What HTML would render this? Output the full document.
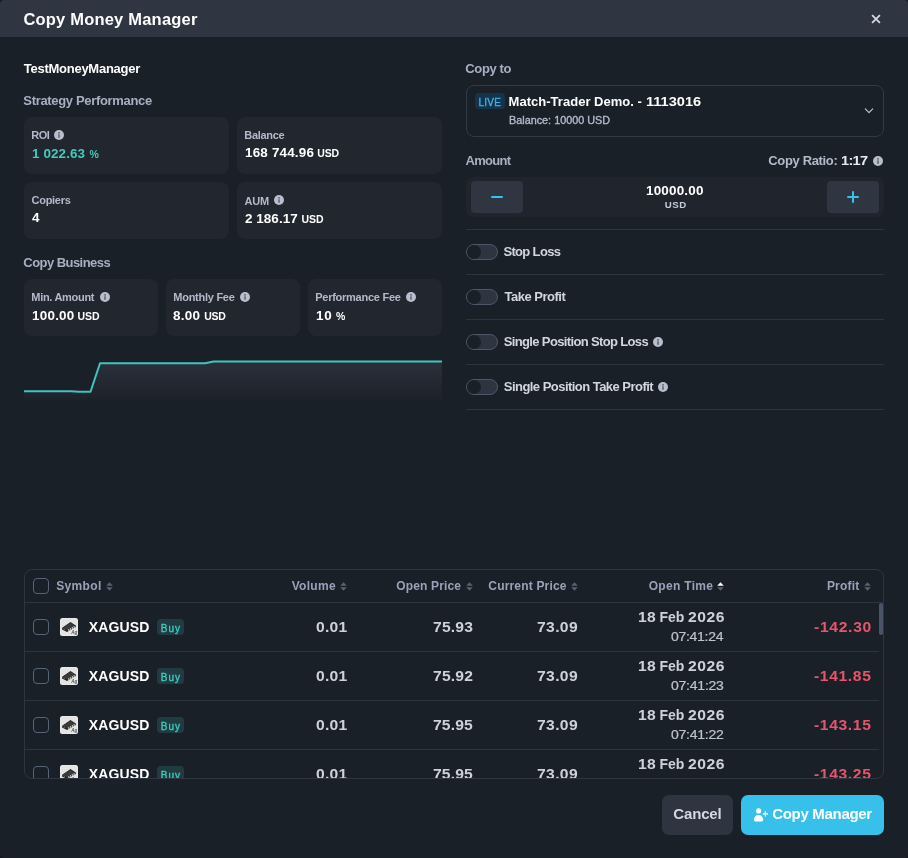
<!DOCTYPE html>
<html><head><meta charset="utf-8"><title>Copy Money Manager</title>
<style>
*{box-sizing:border-box;margin:0;padding:0}
html,body{width:908px;height:858px;overflow:hidden;background:#14181e;font-family:"Liberation Sans",sans-serif;color:#fff}
#root{position:absolute;left:0;top:0;width:908px;height:858px;will-change:transform;background:#1a2028;border-radius:4px;overflow:hidden}
.a{position:absolute}
.x{position:absolute;white-space:nowrap;line-height:1}
.card{position:absolute;background:#22272f;border-radius:8px}
.hr{position:absolute;left:466px;width:418px;height:1px;background:#2d333f}
.tog{position:absolute;left:466px;width:32px;height:16px;border-radius:8px;background:#2f3441;border:1px solid #4c586a}
.tog:before{content:"";position:absolute;left:0;top:0;width:14px;height:14px;border-radius:50%;background:#1a2028}
#tbl{position:absolute;left:24px;top:569px;width:860px;height:210px;border:1px solid #2f3541;border-radius:8px;overflow:hidden}
#tin{position:absolute;left:-25px;top:-570px;width:908px;height:858px}
.cb{position:absolute;left:33px;width:16px;height:16px;border:1px solid #566478;border-radius:4px}
.rl{position:absolute;left:25px;width:854px;height:1px;background:#2d333f}
.buy{position:absolute;left:157px;width:27px;height:16px;border-radius:4px;background:#203c42}
</style></head><body>
<div id="root">
<div class="a" style="left:0;top:0;width:908px;height:37px;background:#2f3541;"></div>
<svg class="a" style="left:871px;top:13.85px" width="10" height="10" viewBox="0 0 10 10"><path d="M1.1 1.1L8.9 8.9M8.9 1.1L1.1 8.9" stroke="#d2d6e1" stroke-width="1.85"/></svg>
<div class="card" style="left:24px;top:117px;width:205px;height:57px"></div>
<div class="card" style="left:237px;top:117px;width:205px;height:57px"></div>
<div class="card" style="left:24px;top:182px;width:205px;height:57px"></div>
<div class="card" style="left:237px;top:182px;width:205px;height:57px"></div>
<div class="card" style="left:24px;top:279px;width:134px;height:57px"></div>
<div class="card" style="left:166px;top:279px;width:134px;height:57px"></div>
<div class="card" style="left:308px;top:279px;width:134px;height:57px"></div>
<svg class="a" style="left:54px;top:130px" width="10" height="10" viewBox="0 0 10 10"><circle cx="5" cy="5" r="5" fill="#b9becc"/><circle cx="5" cy="2.9" r="0.8" fill="#4d5361"/><rect x="4.35" y="4.3" width="1.3" height="3.5" rx="0.3" fill="#4d5361"/></svg>
<svg class="a" style="left:274px;top:195px" width="10" height="10" viewBox="0 0 10 10"><circle cx="5" cy="5" r="5" fill="#b9becc"/><circle cx="5" cy="2.9" r="0.8" fill="#4d5361"/><rect x="4.35" y="4.3" width="1.3" height="3.5" rx="0.3" fill="#4d5361"/></svg>
<svg class="a" style="left:100px;top:292px" width="10" height="10" viewBox="0 0 10 10"><circle cx="5" cy="5" r="5" fill="#b9becc"/><circle cx="5" cy="2.9" r="0.8" fill="#4d5361"/><rect x="4.35" y="4.3" width="1.3" height="3.5" rx="0.3" fill="#4d5361"/></svg>
<svg class="a" style="left:240px;top:292px" width="10" height="10" viewBox="0 0 10 10"><circle cx="5" cy="5" r="5" fill="#b9becc"/><circle cx="5" cy="2.9" r="0.8" fill="#4d5361"/><rect x="4.35" y="4.3" width="1.3" height="3.5" rx="0.3" fill="#4d5361"/></svg>
<svg class="a" style="left:406px;top:292px" width="10" height="10" viewBox="0 0 10 10"><circle cx="5" cy="5" r="5" fill="#b9becc"/><circle cx="5" cy="2.9" r="0.8" fill="#4d5361"/><rect x="4.35" y="4.3" width="1.3" height="3.5" rx="0.3" fill="#4d5361"/></svg>
<svg class="a" style="left:873px;top:156px" width="10" height="10" viewBox="0 0 10 10"><circle cx="5" cy="5" r="5" fill="#b9becc"/><circle cx="5" cy="2.9" r="0.8" fill="#474d5a"/><rect x="4.35" y="4.3" width="1.3" height="3.5" rx="0.3" fill="#474d5a"/></svg>
<svg class="a" style="left:653px;top:337px" width="10" height="10" viewBox="0 0 10 10"><circle cx="5" cy="5" r="5" fill="#b9becc"/><circle cx="5" cy="2.9" r="0.8" fill="#474d5a"/><rect x="4.35" y="4.3" width="1.3" height="3.5" rx="0.3" fill="#474d5a"/></svg>
<svg class="a" style="left:658px;top:382px" width="10" height="10" viewBox="0 0 10 10"><circle cx="5" cy="5" r="5" fill="#b9becc"/><circle cx="5" cy="2.9" r="0.8" fill="#474d5a"/><rect x="4.35" y="4.3" width="1.3" height="3.5" rx="0.3" fill="#474d5a"/></svg>
<svg class="a" style="left:24px;top:350px" width="418" height="52" viewBox="0 0 418 52">
<defs><linearGradient id="g" gradientUnits="userSpaceOnUse" x1="0" y1="11" x2="0" y2="50.5"><stop offset="0" stop-color="#2b303b"/><stop offset="1" stop-color="#1c222a"/></linearGradient></defs>
<path d="M0 41.25H47L55 41.75H66.5L76 13.25H181L189.75 11.5H418V50.5H0Z" fill="url(#g)"/>
<path d="M0 41.25H47L55 41.75H66.5L76 13.25H181L189.75 11.5H418" fill="none" stroke="#40c4bd" stroke-width="2" stroke-linejoin="round"/></svg>
<div class="a" style="left:466px;top:85px;width:418px;height:52px;border:1px solid #333a47;border-radius:8px"></div>
<div class="a" style="left:475px;top:93px;width:30px;height:16px;border-radius:4px;background:#15334a"></div>
<svg class="a" style="left:863px;top:106.4px" width="12" height="10" viewBox="0 0 12 10"><path d="M2.35 2.9L6 6.6L9.65 2.9" fill="none" stroke="#c3c8d5" stroke-width="1.15" stroke-linecap="round" stroke-linejoin="round"/></svg>
<div class="a" style="left:466px;top:177px;width:418px;height:40px;background:#20252d;border-radius:7px"></div>
<div class="a" style="left:471px;top:181px;width:52px;height:32px;background:#2f3541;border-radius:4px"></div>
<div class="a" style="left:827px;top:181px;width:52px;height:32px;background:#2f3541;border-radius:4px"></div>
<div class="a" style="left:491px;top:196.2px;width:12px;height:2px;background:#3bc0ee;border-radius:1px"></div>
<div class="a" style="left:847px;top:196.2px;width:12px;height:2px;background:#3bc0ee;border-radius:1px"></div>
<div class="a" style="left:852px;top:191.2px;width:2px;height:12px;background:#3bc0ee;border-radius:1px"></div>
<div class="hr" style="top:229px"></div>
<div class="hr" style="top:274px"></div>
<div class="hr" style="top:319px"></div>
<div class="hr" style="top:364px"></div>
<div class="hr" style="top:409px"></div>
<div class="tog" style="top:244px"></div>
<div class="tog" style="top:289px"></div>
<div class="tog" style="top:334px"></div>
<div class="tog" style="top:379px"></div>
<div class="x" id="title" style="left:23.41px;top:11.36px;font-size:16.5px;color:#fff;font-weight:bold;letter-spacing:0.200px">Copy Money Manager</div>
<div class="x" id="name" style="left:23.77px;top:61.92px;font-size:13px;color:#fff;font-weight:bold;letter-spacing:-0.260px">TestMoneyManager</div>
<div class="x" id="sp" style="left:23.35px;top:93.92px;font-size:13px;color:#a9afc1;font-weight:bold;letter-spacing:-0.331px">Strategy Performance</div>
<div class="x" id="cb_" style="left:23.33px;top:256.42px;font-size:13px;color:#a9afc1;font-weight:bold;letter-spacing:-0.549px">Copy Business</div>
<div class="x" id="l_roi" style="left:31.28px;top:129.74px;font-size:11px;color:#b3b9ca;font-weight:bold;letter-spacing:-0.468px">ROI</div>
<div class="x" id="l_bal" style="left:244.28px;top:129.74px;font-size:11px;color:#b3b9ca;font-weight:bold;letter-spacing:-0.301px">Balance</div>
<div class="x" id="l_cop" style="left:31.56px;top:194.74px;font-size:11px;color:#b3b9ca;font-weight:bold;letter-spacing:-0.281px">Copiers</div>
<div class="x" id="l_aum" style="left:244.38px;top:196.24px;font-size:11px;color:#b3b9ca;font-weight:bold;letter-spacing:-0.078px">AUM</div>
<div class="x" id="l_min" style="left:31.28px;top:291.74px;font-size:11px;color:#b3b9ca;font-weight:bold;letter-spacing:-0.292px">Min. Amount</div>
<div class="x" id="l_mon" style="left:173.28px;top:291.74px;font-size:11px;color:#b3b9ca;font-weight:bold;letter-spacing:-0.260px">Monthly Fee</div>
<div class="x" id="l_per" style="left:315.28px;top:291.74px;font-size:11px;color:#b3b9ca;font-weight:bold;letter-spacing:-0.262px">Performance Fee</div>
<div class="x" id="v_roi" style="left:32.26px;top:147.58px;font-size:12px;color:#40cbbc;font-weight:bold;letter-spacing:0.090px;transform:scaleX(1.12);transform-origin:0 0">1 022.63</div>
<div class="x" id="v_roip" style="left:89.62px;top:148.82px;font-size:10.5px;color:#40cbbc;font-weight:bold">%</div>
<div class="x" id="v_bal" style="left:245.10px;top:146.58px;font-size:12px;color:#fff;font-weight:bold;letter-spacing:0.163px;transform:scaleX(1.12);transform-origin:0 0">168 744.96</div>
<div class="x" id="v_balu" style="left:317.33px;top:147.82px;font-size:10.5px;color:#fff;font-weight:bold;letter-spacing:-0.155px">USD</div>
<div class="x" id="v_cop" style="left:31.72px;top:211.58px;font-size:12px;color:#fff;font-weight:bold;transform:scaleX(1.12);transform-origin:0 0">4</div>
<div class="x" id="v_aum" style="left:244.97px;top:212.58px;font-size:12px;color:#fff;font-weight:bold;letter-spacing:0.045px;transform:scaleX(1.12);transform-origin:0 0">2 186.17</div>
<div class="x" id="v_aumu" style="left:301.61px;top:213.82px;font-size:10.5px;color:#fff;font-weight:bold;letter-spacing:-0.132px">USD</div>
<div class="x" id="v_min" style="left:31.56px;top:310.33px;font-size:12px;color:#fff;font-weight:bold;letter-spacing:0.210px;transform:scaleX(1.12);transform-origin:0 0">100.00</div>
<div class="x" id="v_minu" style="left:77.61px;top:310.57px;font-size:10.5px;color:#fff;font-weight:bold;letter-spacing:-0.132px">USD</div>
<div class="x" id="v_mon" style="left:173.45px;top:310.33px;font-size:12px;color:#fff;font-weight:bold;letter-spacing:0.222px;transform:scaleX(1.12);transform-origin:0 0">8.00</div>
<div class="x" id="v_monu" style="left:204.33px;top:310.57px;font-size:10.5px;color:#fff;font-weight:bold;letter-spacing:-0.292px">USD</div>
<div class="x" id="v_per" style="left:315.99px;top:310.33px;font-size:12px;color:#fff;font-weight:bold;letter-spacing:0.693px;transform:scaleX(1.12);transform-origin:0 0">10</div>
<div class="x" id="v_perp" style="left:335.97px;top:310.57px;font-size:10.5px;color:#fff;font-weight:bold">%</div>
<div class="x" id="copyto" style="left:465.33px;top:62.17px;font-size:13px;color:#a9afc1;font-weight:bold;letter-spacing:-0.386px">Copy to</div>
<div class="x" id="live" style="left:478.55px;top:97.65px;font-size:10px;color:#3bb3e6;font-weight:normal;-webkit-text-stroke:0.35px #3bb3e6;letter-spacing:0.204px">LIVE</div>
<div class="x" id="acct" style="left:508.60px;top:94.92px;font-size:13px;color:#fff;font-weight:bold;letter-spacing:0.020px">Match-Trader Demo. -</div>
<div class="x" id="acctn" style="left:645.84px;top:94.92px;font-size:13px;color:#fff;font-weight:bold;transform:scaleX(1.12);transform-origin:0 0">1113016</div>
<div class="x" id="acctb" style="left:509.44px;top:115.74px;font-size:10.4px;color:#b3b9c9;font-weight:normal;-webkit-text-stroke:0.35px #b3b9c9;letter-spacing:0.009px;transform:scaleX(1.04);transform-origin:0 0">Balance: 10000 USD</div>
<div class="x" id="amount" style="left:465.54px;top:154.17px;font-size:13px;color:#a9afc1;font-weight:bold;letter-spacing:-0.719px">Amount</div>
<div class="x" id="ratio" style="left:768.32px;top:154.17px;font-size:13px;color:#b4bac9;font-weight:bold;letter-spacing:-0.349px">Copy Ratio:</div>
<div class="x" id="ratiov" style="left:840.67px;top:154.17px;font-size:13px;color:#e6e9f0;font-weight:bold;letter-spacing:-0.638px;transform:scaleX(1.12);transform-origin:0 0">1:17</div>
<div class="x" id="amt" style="left:646.40px;top:184.58px;font-size:12px;color:#fff;font-weight:bold;letter-spacing:0.178px;transform:scaleX(1.12);transform-origin:0 0">10000.00</div>
<div class="x" id="amtu" style="left:664.75px;top:200.40px;font-size:9.7px;color:#c6cbd8;font-weight:bold;letter-spacing:0.482px">USD</div>
<div class="x" id="tg1" style="left:503.42px;top:245.42px;font-size:13px;color:#d2d6e0;font-weight:bold;letter-spacing:-0.659px">Stop Loss</div>
<div class="x" id="tg2" style="left:504.40px;top:290.42px;font-size:13px;color:#d2d6e0;font-weight:bold;letter-spacing:-0.482px">Take Profit</div>
<div class="x" id="tg3" style="left:503.78px;top:335.42px;font-size:13px;color:#d2d6e0;font-weight:bold;letter-spacing:-0.645px">Single Position Stop Loss</div>
<div class="x" id="tg4" style="left:503.78px;top:380.42px;font-size:13px;color:#d2d6e0;font-weight:bold;letter-spacing:-0.534px">Single Position Take Profit</div>
<div id="tbl"><div id="tin">
<div class="cb" style="top:578px"></div>
<svg class="a" style="left:105.5px;top:581.5px" width="7" height="9" viewBox="0 0 7 9"><path d="M0.2 3.7L3.5 0.3L6.8 3.7Z" fill="#596274"/><path d="M0.2 5.3L3.5 8.7L6.8 5.3Z" fill="#596274"/></svg>
<svg class="a" style="left:339.8px;top:581.5px" width="7" height="9" viewBox="0 0 7 9"><path d="M0.2 3.7L3.5 0.3L6.8 3.7Z" fill="#596274"/><path d="M0.2 5.3L3.5 8.7L6.8 5.3Z" fill="#596274"/></svg>
<svg class="a" style="left:465.8px;top:581.5px" width="7" height="9" viewBox="0 0 7 9"><path d="M0.2 3.7L3.5 0.3L6.8 3.7Z" fill="#596274"/><path d="M0.2 5.3L3.5 8.7L6.8 5.3Z" fill="#596274"/></svg>
<svg class="a" style="left:570.8px;top:581.5px" width="7" height="9" viewBox="0 0 7 9"><path d="M0.2 3.7L3.5 0.3L6.8 3.7Z" fill="#596274"/><path d="M0.2 5.3L3.5 8.7L6.8 5.3Z" fill="#596274"/></svg>
<svg class="a" style="left:716.6px;top:581.5px" width="7" height="9" viewBox="0 0 7 9"><path d="M0.2 3.7L3.5 0.3L6.8 3.7Z" fill="#fff"/><path d="M0.2 5.3L3.5 8.7L6.8 5.3Z" fill="#596274"/></svg>
<svg class="a" style="left:863.8px;top:581.5px" width="7" height="9" viewBox="0 0 7 9"><path d="M0.2 3.7L3.5 0.3L6.8 3.7Z" fill="#596274"/><path d="M0.2 5.3L3.5 8.7L6.8 5.3Z" fill="#596274"/></svg>
<div class="a" style="left:25px;top:602px;width:858px;height:1px;background:#2d333f"></div>
<div class="cb" style="top:619px"></div><svg class="a" style="left:60px;top:618px" width="18" height="18" viewBox="0 0 18 18"><rect width="18" height="18" rx="2.5" fill="#efefef"/><rect x="0.6" y="0.6" width="16.8" height="16.8" rx="2" fill="#e4e4e4"/><path d="M2.2 9.7L10.5 4.1L15.8 7.5L15.9 9L7 14L2 11.4Z" fill="#262626"/><path d="M3.2 9.8L10.5 4.9L14.6 7.5L7.2 12.2Z" fill="#3b3b3b"/><path d="M8.3 12.4L9.4 11.75M10.1 11.35L11.2 10.7M11.9 10.3L13 9.65M13.6 9.3L14.7 8.65" stroke="#e0e0e0" stroke-width="1.5"/><path d="M3.6 10.9L4.6 11.45" stroke="#bbb" stroke-width="0.8"/><text x="11.2" y="16.3" font-family="Liberation Sans" font-size="4.6" font-weight="bold" font-style="italic" fill="#5a5a5a">Ag</text></svg><div class="buy" style="top:619px"></div><div class="rl" style="top:651px"></div>
<div class="cb" style="top:668px"></div><svg class="a" style="left:60px;top:667px" width="18" height="18" viewBox="0 0 18 18"><rect width="18" height="18" rx="2.5" fill="#efefef"/><rect x="0.6" y="0.6" width="16.8" height="16.8" rx="2" fill="#e4e4e4"/><path d="M2.2 9.7L10.5 4.1L15.8 7.5L15.9 9L7 14L2 11.4Z" fill="#262626"/><path d="M3.2 9.8L10.5 4.9L14.6 7.5L7.2 12.2Z" fill="#3b3b3b"/><path d="M8.3 12.4L9.4 11.75M10.1 11.35L11.2 10.7M11.9 10.3L13 9.65M13.6 9.3L14.7 8.65" stroke="#e0e0e0" stroke-width="1.5"/><path d="M3.6 10.9L4.6 11.45" stroke="#bbb" stroke-width="0.8"/><text x="11.2" y="16.3" font-family="Liberation Sans" font-size="4.6" font-weight="bold" font-style="italic" fill="#5a5a5a">Ag</text></svg><div class="buy" style="top:668px"></div><div class="rl" style="top:700px"></div>
<div class="cb" style="top:717px"></div><svg class="a" style="left:60px;top:716px" width="18" height="18" viewBox="0 0 18 18"><rect width="18" height="18" rx="2.5" fill="#efefef"/><rect x="0.6" y="0.6" width="16.8" height="16.8" rx="2" fill="#e4e4e4"/><path d="M2.2 9.7L10.5 4.1L15.8 7.5L15.9 9L7 14L2 11.4Z" fill="#262626"/><path d="M3.2 9.8L10.5 4.9L14.6 7.5L7.2 12.2Z" fill="#3b3b3b"/><path d="M8.3 12.4L9.4 11.75M10.1 11.35L11.2 10.7M11.9 10.3L13 9.65M13.6 9.3L14.7 8.65" stroke="#e0e0e0" stroke-width="1.5"/><path d="M3.6 10.9L4.6 11.45" stroke="#bbb" stroke-width="0.8"/><text x="11.2" y="16.3" font-family="Liberation Sans" font-size="4.6" font-weight="bold" font-style="italic" fill="#5a5a5a">Ag</text></svg><div class="buy" style="top:717px"></div><div class="rl" style="top:749px"></div>
<div class="cb" style="top:766px"></div><svg class="a" style="left:60px;top:765px" width="18" height="18" viewBox="0 0 18 18"><rect width="18" height="18" rx="2.5" fill="#efefef"/><rect x="0.6" y="0.6" width="16.8" height="16.8" rx="2" fill="#e4e4e4"/><path d="M2.2 9.7L10.5 4.1L15.8 7.5L15.9 9L7 14L2 11.4Z" fill="#262626"/><path d="M3.2 9.8L10.5 4.9L14.6 7.5L7.2 12.2Z" fill="#3b3b3b"/><path d="M8.3 12.4L9.4 11.75M10.1 11.35L11.2 10.7M11.9 10.3L13 9.65M13.6 9.3L14.7 8.65" stroke="#e0e0e0" stroke-width="1.5"/><path d="M3.6 10.9L4.6 11.45" stroke="#bbb" stroke-width="0.8"/><text x="11.2" y="16.3" font-family="Liberation Sans" font-size="4.6" font-weight="bold" font-style="italic" fill="#5a5a5a">Ag</text></svg><div class="buy" style="top:766px"></div><div class="rl" style="top:798px"></div>
<div class="a" style="left:879px;top:603px;width:4px;height:32px;border-radius:2px;background:#4b5467"></div>
<div class="x" id="h_sym" style="left:56.13px;top:579.58px;font-size:12px;color:#99a2b8;font-weight:bold;letter-spacing:0.357px">Symbol</div>
<div class="x" id="h_vol" style="left:291.70px;top:579.58px;font-size:12px;color:#99a2b8;font-weight:bold;letter-spacing:0.284px">Volume</div>
<div class="x" id="h_op" style="left:396.35px;top:579.58px;font-size:12px;color:#99a2b8;font-weight:bold;letter-spacing:0.140px">Open Price</div>
<div class="x" id="h_cp" style="left:488.35px;top:579.58px;font-size:12px;color:#99a2b8;font-weight:bold;letter-spacing:0.171px">Current Price</div>
<div class="x" id="h_ot" style="left:648.70px;top:579.58px;font-size:12px;color:#99a2b8;font-weight:bold;letter-spacing:0.315px">Open Time</div>
<div class="x" id="h_pf" style="left:826.91px;top:579.58px;font-size:12px;color:#99a2b8;font-weight:bold;letter-spacing:0.212px">Profit</div>
<div class="x" id="r0s" style="left:88.65px;top:619.76px;font-size:14px;color:#fff;font-weight:bold;letter-spacing:0.152px">XAGUSD</div>
<div class="x" id="r0b" style="left:160.65px;top:624.32px;font-size:10px;color:#40cbbc;font-weight:normal;-webkit-text-stroke:0.35px #40cbbc;letter-spacing:1.104px">Buy</div>
<div class="x" id="r0v" style="left:315.87px;top:619.76px;font-size:14px;color:#cdd1dc;font-weight:bold;letter-spacing:0.237px;transform:scaleX(1.12);transform-origin:0 0">0.01</div>
<div class="x" id="r0o" style="left:432.98px;top:619.76px;font-size:14px;color:#cdd1dc;font-weight:bold;letter-spacing:0.166px;transform:scaleX(1.12);transform-origin:0 0">75.93</div>
<div class="x" id="r0c" style="left:536.94px;top:619.76px;font-size:14px;color:#cdd1dc;font-weight:bold;letter-spacing:0.307px;transform:scaleX(1.12);transform-origin:0 0">73.09</div>
<div class="x" id="r0d" style="left:637.74px;top:609.76px;font-size:14px;color:#cdd1dc;font-weight:bold;letter-spacing:0.139px;transform:scaleX(1.12);transform-origin:0 0">18</div>
<div class="x" id="r0e" style="left:659.51px;top:609.76px;font-size:14px;color:#cdd1dc;font-weight:bold">Feb</div>
<div class="x" id="r0f" style="left:688.27px;top:609.76px;font-size:14px;color:#cdd1dc;font-weight:bold;letter-spacing:0.471px;transform:scaleX(1.12);transform-origin:0 0">2026</div>
<div class="x" id="r0t" style="left:671.28px;top:631.00px;font-size:12.5px;color:#bec3d0;font-weight:normal;-webkit-text-stroke:0.2px #bec3d0;letter-spacing:-0.252px;transform:scaleX(1.12);transform-origin:0 0">07:41:24</div>
<div class="x" id="r0p" style="left:813.91px;top:619.76px;font-size:14px;color:#e5556b;font-weight:bold;letter-spacing:0.605px;transform:scaleX(1.12);transform-origin:0 0">-142.30</div>
<div class="x" id="r1s" style="left:88.65px;top:668.76px;font-size:14px;color:#fff;font-weight:bold;letter-spacing:0.152px">XAGUSD</div>
<div class="x" id="r1b" style="left:160.65px;top:673.32px;font-size:10px;color:#40cbbc;font-weight:normal;-webkit-text-stroke:0.35px #40cbbc;letter-spacing:1.104px">Buy</div>
<div class="x" id="r1v" style="left:315.87px;top:668.76px;font-size:14px;color:#cdd1dc;font-weight:bold;letter-spacing:0.237px;transform:scaleX(1.12);transform-origin:0 0">0.01</div>
<div class="x" id="r1o" style="left:432.94px;top:668.76px;font-size:14px;color:#cdd1dc;font-weight:bold;letter-spacing:0.151px;transform:scaleX(1.12);transform-origin:0 0">75.92</div>
<div class="x" id="r1c" style="left:536.94px;top:668.76px;font-size:14px;color:#cdd1dc;font-weight:bold;letter-spacing:0.307px;transform:scaleX(1.12);transform-origin:0 0">73.09</div>
<div class="x" id="r1d" style="left:637.74px;top:658.76px;font-size:14px;color:#cdd1dc;font-weight:bold;letter-spacing:0.139px;transform:scaleX(1.12);transform-origin:0 0">18</div>
<div class="x" id="r1e" style="left:659.51px;top:658.76px;font-size:14px;color:#cdd1dc;font-weight:bold">Feb</div>
<div class="x" id="r1f" style="left:688.27px;top:658.76px;font-size:14px;color:#cdd1dc;font-weight:bold;letter-spacing:0.471px;transform:scaleX(1.12);transform-origin:0 0">2026</div>
<div class="x" id="r1t" style="left:671.23px;top:680.00px;font-size:12.5px;color:#bec3d0;font-weight:normal;-webkit-text-stroke:0.2px #bec3d0;letter-spacing:-0.203px;transform:scaleX(1.12);transform-origin:0 0">07:41:23</div>
<div class="x" id="r1p" style="left:813.86px;top:668.76px;font-size:14px;color:#e5556b;font-weight:bold;letter-spacing:0.547px;transform:scaleX(1.12);transform-origin:0 0">-141.85</div>
<div class="x" id="r2s" style="left:88.65px;top:717.76px;font-size:14px;color:#fff;font-weight:bold;letter-spacing:0.152px">XAGUSD</div>
<div class="x" id="r2b" style="left:160.65px;top:722.32px;font-size:10px;color:#40cbbc;font-weight:normal;-webkit-text-stroke:0.35px #40cbbc;letter-spacing:1.104px">Buy</div>
<div class="x" id="r2v" style="left:315.87px;top:717.76px;font-size:14px;color:#cdd1dc;font-weight:bold;letter-spacing:0.237px;transform:scaleX(1.12);transform-origin:0 0">0.01</div>
<div class="x" id="r2o" style="left:433.05px;top:717.76px;font-size:14px;color:#cdd1dc;font-weight:bold;letter-spacing:0.123px;transform:scaleX(1.12);transform-origin:0 0">75.95</div>
<div class="x" id="r2c" style="left:536.94px;top:717.76px;font-size:14px;color:#cdd1dc;font-weight:bold;letter-spacing:0.307px;transform:scaleX(1.12);transform-origin:0 0">73.09</div>
<div class="x" id="r2d" style="left:637.74px;top:707.76px;font-size:14px;color:#cdd1dc;font-weight:bold;letter-spacing:0.139px;transform:scaleX(1.12);transform-origin:0 0">18</div>
<div class="x" id="r2e" style="left:659.51px;top:707.76px;font-size:14px;color:#cdd1dc;font-weight:bold">Feb</div>
<div class="x" id="r2f" style="left:688.27px;top:707.76px;font-size:14px;color:#cdd1dc;font-weight:bold;letter-spacing:0.471px;transform:scaleX(1.12);transform-origin:0 0">2026</div>
<div class="x" id="r2t" style="left:671.06px;top:729.00px;font-size:12.5px;color:#bec3d0;font-weight:normal;-webkit-text-stroke:0.2px #bec3d0;letter-spacing:-0.214px;transform:scaleX(1.12);transform-origin:0 0">07:41:22</div>
<div class="x" id="r2p" style="left:813.86px;top:717.76px;font-size:14px;color:#e5556b;font-weight:bold;letter-spacing:0.547px;transform:scaleX(1.12);transform-origin:0 0">-143.15</div>
<div class="x" id="r3s" style="left:88.65px;top:766.76px;font-size:14px;color:#fff;font-weight:bold;letter-spacing:0.152px">XAGUSD</div>
<div class="x" id="r3b" style="left:160.65px;top:771.32px;font-size:10px;color:#40cbbc;font-weight:normal;-webkit-text-stroke:0.35px #40cbbc;letter-spacing:1.104px">Buy</div>
<div class="x" id="r3v" style="left:315.87px;top:766.76px;font-size:14px;color:#cdd1dc;font-weight:bold;letter-spacing:0.237px;transform:scaleX(1.12);transform-origin:0 0">0.01</div>
<div class="x" id="r3o" style="left:433.05px;top:766.76px;font-size:14px;color:#cdd1dc;font-weight:bold;letter-spacing:0.123px;transform:scaleX(1.12);transform-origin:0 0">75.95</div>
<div class="x" id="r3c" style="left:536.94px;top:766.76px;font-size:14px;color:#cdd1dc;font-weight:bold;letter-spacing:0.307px;transform:scaleX(1.12);transform-origin:0 0">73.09</div>
<div class="x" id="r3d" style="left:637.74px;top:756.76px;font-size:14px;color:#cdd1dc;font-weight:bold;letter-spacing:0.139px;transform:scaleX(1.12);transform-origin:0 0">18</div>
<div class="x" id="r3e" style="left:659.51px;top:756.76px;font-size:14px;color:#cdd1dc;font-weight:bold">Feb</div>
<div class="x" id="r3f" style="left:688.27px;top:756.76px;font-size:14px;color:#cdd1dc;font-weight:bold;letter-spacing:0.471px;transform:scaleX(1.12);transform-origin:0 0">2026</div>
<div class="x" id="r3t" style="left:671.58px;top:778.00px;font-size:12.5px;color:#bec3d0;font-weight:normal;-webkit-text-stroke:0.2px #bec3d0;letter-spacing:-0.219px;transform:scaleX(1.12);transform-origin:0 0">07:41:21</div>
<div class="x" id="r3p" style="left:813.86px;top:766.76px;font-size:14px;color:#e5556b;font-weight:bold;letter-spacing:0.547px;transform:scaleX(1.12);transform-origin:0 0">-143.25</div>
</div></div>
<div class="a" style="left:662px;top:795px;width:71px;height:40px;border-radius:7px;background:#2f3441"></div>
<div class="a" style="left:741px;top:795px;width:143px;height:40px;border-radius:7px;background:#37c0ea"></div>
<svg class="a" style="left:753px;top:807px" width="16" height="16" viewBox="0 0 16 16"><circle cx="5.6" cy="3.9" r="2.55" fill="#fff"/><path d="M0.9 12.8C0.9 9.9 3 7.9 5.55 7.9C8.1 7.9 10.2 9.9 10.2 12.8C10.2 13.9 9.5 14.5 8.6 14.5H2.5C1.6 14.5 0.9 13.9 0.9 12.8Z" fill="#fff"/><path d="M12.4 4.2V9.4M9.8 6.8H15" stroke="#fff" stroke-width="1.3"/></svg>
<div class="x" id="cancel" style="left:673.29px;top:805.60px;font-size:15px;color:#d3d7e2;font-weight:bold;letter-spacing:-0.162px">Cancel</div>
<div class="x" id="copym" style="left:772.25px;top:805.60px;font-size:15px;color:#fff;font-weight:bold;letter-spacing:-0.313px">Copy Manager</div>
</div>
</body></html>
